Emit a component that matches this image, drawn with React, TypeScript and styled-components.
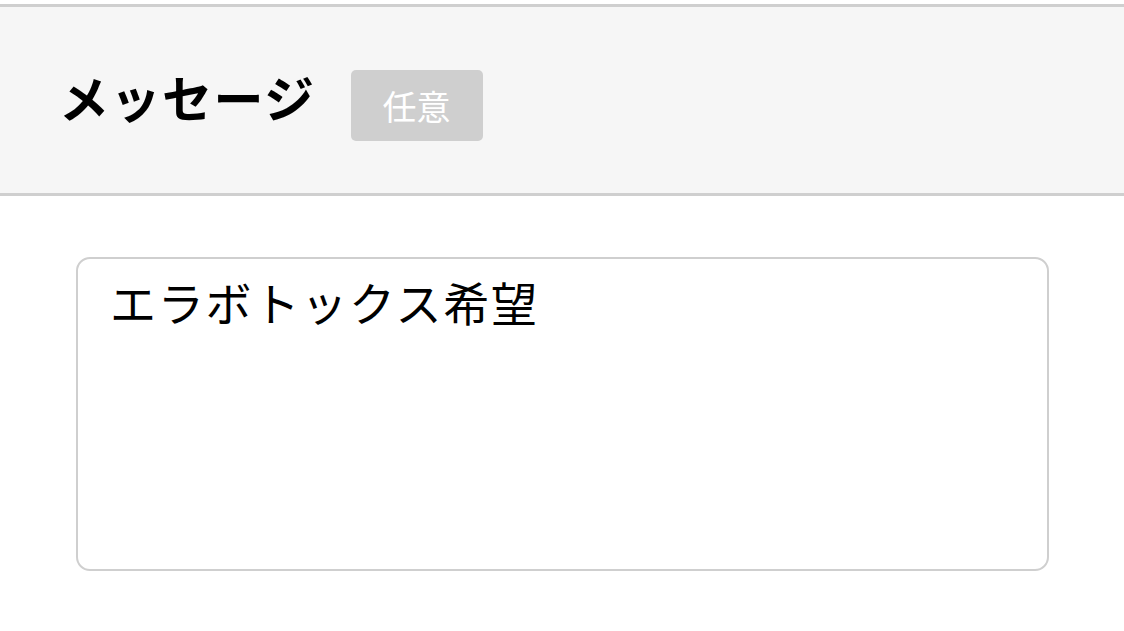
import React from 'react'
import styled, { createGlobalStyle } from 'styled-components'

const GlobalStyle = createGlobalStyle`
  html, body {
    margin: 0;
    padding: 0;
    background: #ffffff;
    font-family: "Noto Sans CJK JP", "Noto Sans", sans-serif;
  }
`

const Page = styled.div`
  padding-top: 4px;
`

const FieldHeader = styled.div`
  display: flex;
  align-items: center;
  gap: 35px;
  height: 186px;
  padding-left: 59px;
  background: #f6f6f6;
  border-top: 3px solid #cfcfcf;
  border-bottom: 3px solid #cfcfcf;
`

const Label = styled.h2`
  margin: 0 0 8px;
  font-size: 50px;
  font-weight: 700;
  color: #000;
  letter-spacing: 1.5px;
`

const Badge = styled.span`
  display: flex;
  align-items: center;
  justify-content: center;
  width: 132px;
  height: 71px;
  margin-top: 11px;
  border-radius: 5px;
  background: #cfcfcf;
  color: #ffffff;
  font-size: 34px;
`

const FieldBody = styled.div`
  padding: 61px 0 0 76px;
`

const MessageBox = styled.textarea`
  box-sizing: border-box;
  display: block;
  width: 973px;
  height: 314px;
  margin: 0;
  padding: 10px 32px;
  border: 2px solid #cfcfcf;
  border-radius: 14px;
  background: #fff;
  color: #000;
  font-family: "Noto Sans CJK JP", "Noto Sans", sans-serif;
  font-size: 46px;
  line-height: 1.4;
  letter-spacing: 1.8px;
  resize: none;
  outline: none;
`

export default function App() {
  return (
    <>
      <GlobalStyle />
      <Page>
        <FieldHeader>
          <Label>メッセージ</Label>
          <Badge>任意</Badge>
        </FieldHeader>
        <FieldBody>
          <MessageBox readOnly defaultValue="エラボトックス希望" />
        </FieldBody>
      </Page>
    </>
  )
}
